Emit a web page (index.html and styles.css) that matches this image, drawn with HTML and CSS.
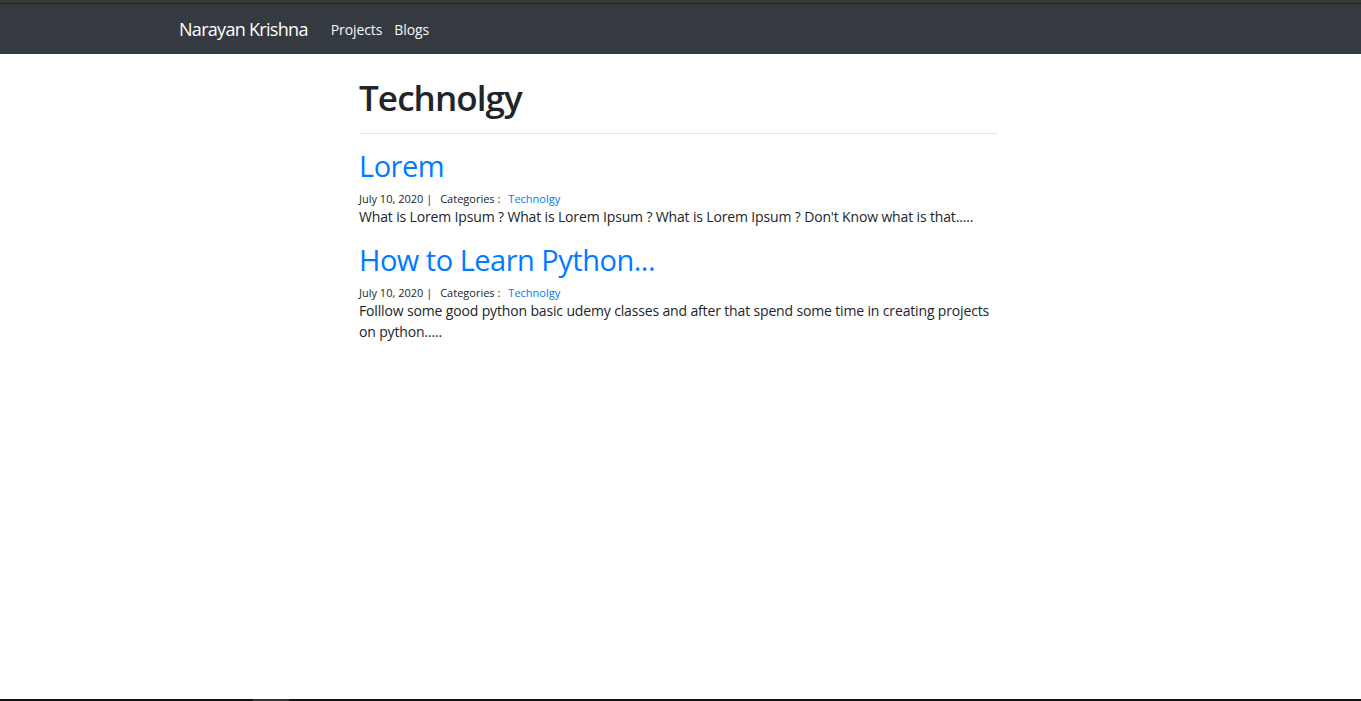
FILE: index.html
```html
<!DOCTYPE html>
<html>
<head>
<meta charset="utf-8">
<link rel="stylesheet" href="styles.css">
</head>
<body>
<div class="topstrip"></div>
<nav class="navbar">
  <a class="brand" href="#">Narayan Krishna</a>
  <a class="nav-link" href="#">Projects</a>
  <a class="nav-link" href="#">Blogs</a>
</nav>
<main class="content">
  <h1 class="page-title">Technolgy</h1>
  <hr class="divider">
  <article class="post">
    <h2 class="post-title"><a href="#">Lorem</a></h2>
    <div class="meta"><span class="date">July 10, 2020 |</span><span class="cat-label">Categories :</span><a class="cat" href="#">Technolgy</a></div>
    <p class="excerpt">What is Lorem Ipsum ? What is Lorem Ipsum ? What is Lorem Ipsum ? Don't Know what is that.....</p>
  </article>
  <article class="post">
    <h2 class="post-title"><a href="#">How to Learn Python...</a></h2>
    <div class="meta"><span class="date">July 10, 2020 |</span><span class="cat-label">Categories :</span><a class="cat" href="#">Technolgy</a></div>
    <p class="excerpt">Folllow some good python basic udemy classes and after that spend some time in creating projects on python.....</p>
  </article>
</main>
<footer class="bottombar"><span class="thumb"></span></footer>
</body>
</html>
```
FILE: styles.css
```css
html, body { height: 100%; }
body {
  margin: 0;
  display: flex;
  flex-direction: column;
  font-family: "Open Sans", "Noto Sans", sans-serif;
  color: #212529;
  background: #fff;
  font-size: 14px;
  line-height: 1.5;
}
a { text-decoration: none; }
.topstrip {
  height: 3px;
  background: #393939;
  border-bottom: 1px solid #222;
  flex: none;
}
.navbar {
  flex: none;
  height: 49px;
  padding-top: 1px;
  background: #343a40;
  display: flex;
  align-items: center;
  padding-left: 179px;
}
.brand {
  color: #fff;
  font-size: 18px;
  letter-spacing: -0.7px;
  margin-right: 23px;
}
.nav-link {
  color: #f8f9fa;
  font-size: 14px;
  letter-spacing: -0.1px;
  margin-right: 12px;
}
.content {
  width: 639px;
  margin: 0 auto;
  padding: 23px 4px 0 0;
}
.page-title {
  font-size: 35px;
  font-weight: 600;
  letter-spacing: -0.9px;
  line-height: 1.2;
  margin: 0 0 14px;
}
.divider {
  border: 0;
  border-top: 1px solid #e5e5e5;
  margin: 0 0 15px;
}
.post { margin-bottom: 16px; }
.post-title {
  font-size: 29px;
  font-weight: 500;
  letter-spacing: -0.5px;
  line-height: 1.2;
  margin: 0 0 8px;
}
.post-title a { color: #007bff; }
.meta {
  font-size: 11px;
  line-height: 14px;
  display: flex;
}
.date { margin-right: 8px; }
.cat-label { margin-right: 8px; }
.cat { color: #007bff; }
.excerpt {
  margin: 0;
  font-size: 14px;
  letter-spacing: -0.15px;
  line-height: 21px;
}
.bottombar {
  margin-top: auto;
  height: 2px;
  background: #111;
  flex: none;
}
.thumb {
  display: block;
  margin-left: 253px;
  width: 36px;
  height: 2px;
  background: #333;
}
```
